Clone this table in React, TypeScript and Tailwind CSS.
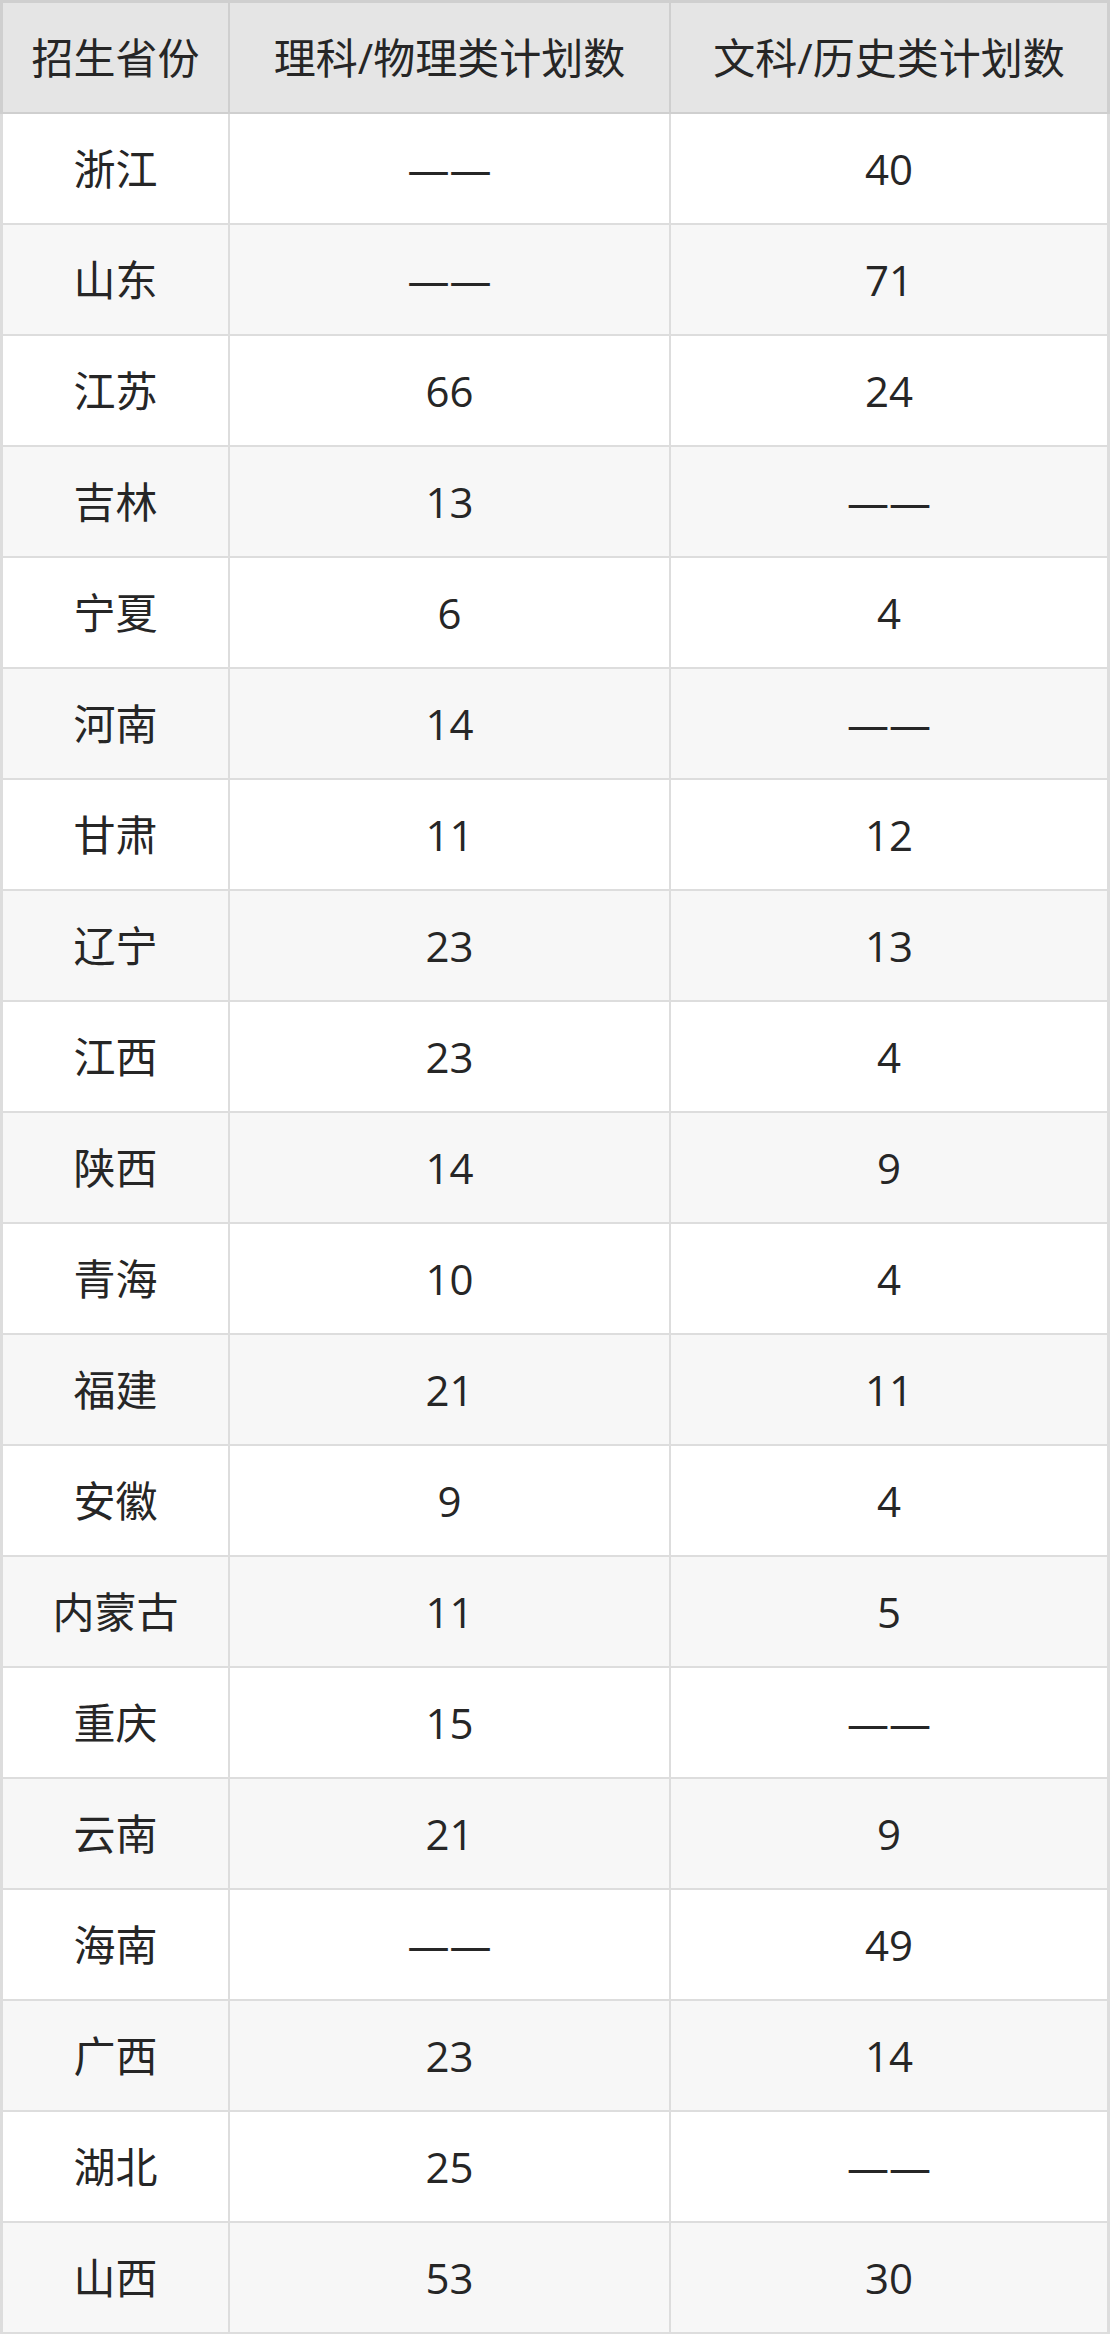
import React from "react";

const rows: [string, string, string][] = [
  ["浙江", "——", "40"],
  ["山东", "——", "71"],
  ["江苏", "66", "24"],
  ["吉林", "13", "——"],
  ["宁夏", "6", "4"],
  ["河南", "14", "——"],
  ["甘肃", "11", "12"],
  ["辽宁", "23", "13"],
  ["江西", "23", "4"],
  ["陕西", "14", "9"],
  ["青海", "10", "4"],
  ["福建", "21", "11"],
  ["安徽", "9", "4"],
  ["内蒙古", "11", "5"],
  ["重庆", "15", "——"],
  ["云南", "21", "9"],
  ["海南", "——", "49"],
  ["广西", "23", "14"],
  ["湖北", "25", "——"],
  ["山西", "53", "30"],
];

export default function App() {
  return (
    <div
      className="w-[1110px] bg-white text-[#262626] text-[42px] leading-none"
      style={{ fontFamily: '"Open Sans", "Noto Sans CJK SC", sans-serif' }}
    >
      <div className="flex h-[114px] bg-[#e5e5e5] border-t-[3px] border-l-[3px] border-r-[3px] border-b-2 border-[#cfcfcf]">
        <div className="w-[227px] flex items-center justify-center border-r-2 border-[#cfcfcf]">招生省份</div>
        <div className="w-[441px] flex items-center justify-center border-r-2 border-[#cfcfcf]">理科/物理类计划数</div>
        <div className="flex-1 flex items-center justify-center">文科/历史类计划数</div>
      </div>
      {rows.map((r, i) => (
        <div
          key={i}
          className={
            "flex h-[111px] border-l-[3px] border-r-[3px] border-b-2 border-[#dddddd] " +
            (i % 2 === 0 ? "bg-white" : "bg-[#f7f7f7]")
          }
        >
          <div className="w-[227px] flex items-center justify-center border-r-2 border-[#dddddd]">{r[0]}</div>
          <div className="w-[441px] flex items-center justify-center border-r-2 border-[#dddddd]">{r[1]}</div>
          <div className="flex-1 flex items-center justify-center">{r[2]}</div>
        </div>
      ))}
    </div>
  );
}
